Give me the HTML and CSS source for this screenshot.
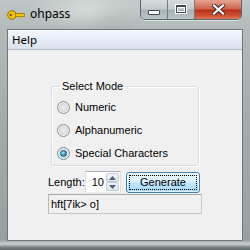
FILE: index.html
```html
<!DOCTYPE html>
<html>
<head>
<meta charset="utf-8">
<link rel="stylesheet" href="styles.css">
</head>
<body>
<div class="window">
  <div class="titlebar">
    <svg class="app-icon" width="18" height="12" viewBox="0 0 18 12">
      <circle cx="5" cy="6" r="4.3" fill="#f2c400" stroke="#9a7300" stroke-width="1"/>
      <circle cx="3.8" cy="6" r="1.2" fill="#7a5a00"/>
      <rect x="8.5" y="4.6" width="8.8" height="2.8" fill="#f2c400" stroke="#9a7300" stroke-width="0.8"/>
      <rect x="13" y="7.4" width="1.6" height="2" fill="#d9a800"/>
    </svg>
    <span class="title">ohpass</span>
    <div class="caption-btns">
      <div class="cb cb-min"><span class="glyph-min"></span></div>
      <div class="cb cb-max"><span class="glyph-max"></span></div>
      <div class="cb cb-close">
        <svg width="13" height="11" viewBox="0 0 13 11">
          <path d="M2 1.5 L11 9.5 M11 1.5 L2 9.5" stroke="#3a2a26" stroke-width="4.2" stroke-linecap="square"/>
          <path d="M2 1.5 L11 9.5 M11 1.5 L2 9.5" stroke="#ffffff" stroke-width="2.2" stroke-linecap="square"/>
        </svg>
      </div>
    </div>
  </div>
  <div class="client">
    <div class="menubar"><span class="menu-item">Help</span></div>
    <div class="form">
      <fieldset class="group">
        <legend class="group-legend">Select Mode</legend>
        <div class="radio-row"><span class="radio"></span><span class="radio-label">Numeric</span></div>
        <div class="radio-row"><span class="radio"></span><span class="radio-label">Alphanumeric</span></div>
        <div class="radio-row"><span class="radio radio-checked"><span class="radio-dot"></span></span><span class="radio-label">Special Characters</span></div>
      </fieldset>
      <div class="ctrl-row">
        <span class="len-label">Length:</span>
        <div class="spin">
          <span class="spin-val">10</span>
          <div class="spin-btns">
            <span class="spin-btn"><svg width="7" height="4" viewBox="0 0 7 4"><path d="M0 4 L3.5 0 L7 4 Z" fill="#4d6185"/></svg></span>
            <span class="spin-btn"><svg width="7" height="4" viewBox="0 0 7 4"><path d="M0 0 L3.5 4 L7 0 Z" fill="#4d6185"/></svg></span>
          </div>
        </div>
        <div class="gen-btn"><span class="gen-focus">Generate</span></div>
      </div>
      <div class="output">hft[7ik&gt; o]</div>
    </div>
  </div>
</div>
</body>
</html>
```

FILE: styles.css
```css
html, body {
  margin: 0;
  padding: 0;
  width: 250px;
  height: 250px;
  overflow: hidden;
}

.window {
  width: 250px;
  height: 250px;
  display: flex;
  flex-direction: column;
  box-sizing: border-box;
  background:
    radial-gradient(ellipse 60px 20px at 90px 10px, rgba(235,240,238,0.55), rgba(235,240,238,0) 100%),
    radial-gradient(ellipse 30px 18px at 110px 18px, rgba(120,130,130,0.25), rgba(120,130,130,0) 100%),
    linear-gradient(180deg, #bfc7c6 0px, #b3bcbb 28px, #a2acab 120px, #97a1a1 240px, #c9cfce 244px, #7e8888 247px, #5e6666 250px);
  font-family: "Liberation Sans", Arial, sans-serif;
  font-size: 11px;
  color: #000;
}

.titlebar {
  height: 29px;
  display: flex;
  align-items: flex-start;
  flex-shrink: 0;
}

.app-icon {
  margin: 9px 0 0 7px;
}

.title {
  margin: 6px 0 0 5px;
  font-family: "Noto Sans", "Open Sans", sans-serif;
  font-size: 12px;
  line-height: 16px;
  color: #000;
}

.caption-btns {
  margin-left: auto;
  margin-right: 8px;
  display: flex;
  height: 19px;
  border: 1px solid #5c6a72;
  border-top: none;
  border-radius: 0 0 5px 5px;
  overflow: hidden;
  box-shadow: 0 1px 0 rgba(255,255,255,0.5);
}

.cb {
  height: 19px;
  display: flex;
  align-items: center;
  justify-content: center;
  box-sizing: border-box;
}

.cb-min {
  width: 27px;
  background: linear-gradient(180deg, #d4dbdd 0%, #c3cccf 45%, #a9b4b8 55%, #b9c3c6 100%);
  border-right: 1px solid #6f7c83;
}

.cb-max {
  width: 27px;
  background: linear-gradient(180deg, #d4dbdd 0%, #c3cccf 45%, #a9b4b8 55%, #b9c3c6 100%);
  border-right: 1px solid #6f7c83;
}

.cb-close {
  width: 46px;
  background: linear-gradient(180deg, #e4a493 0%, #d1654b 45%, #b7321a 55%, #d25536 85%, #e07a5b 100%);
}

.glyph-min {
  width: 10px;
  height: 3px;
  margin-top: 5px;
  background: #fff;
  border: 1px solid #3e4a52;
  border-radius: 1px;
}

.glyph-max {
  width: 8px;
  height: 5px;
  border: 1px solid #3e4a52;
  border-top-width: 2px;
  background: transparent;
  box-shadow: inset 0 0 0 1px #fff, 0 0 0 1px #fff;
  margin-top: -1px;
}

.client {
  flex: 1;
  margin: 0 7px 9px 7px;
  border: 1px solid #6e7878;
  background: #f0f0f0;
  display: flex;
  flex-direction: column;
}

.menubar {
  height: 19px;
  border-bottom: 1px solid #b6bcc6;
  background: linear-gradient(180deg, #f6f8fc 0%, #e5ebf5 50%, #d9e1ef 100%);
  display: flex;
  align-items: center;
}

.menu-item {
  margin-left: 4px;
  font-family: "Noto Sans", "Open Sans", sans-serif;
  font-size: 11.5px;
  line-height: 16px;
  color: #000;
}

.form {
  display: flex;
  flex-direction: column;
  align-items: flex-start;
}

.group {
  margin: 30px 0 0 43px;
  width: 148px;
  box-sizing: border-box;
  padding: 4px 0 0 5px;
  border: 1px solid #d5dfe5;
  border-radius: 3px;
  box-shadow: 1px 1px 0 #fff, inset 1px 1px 0 #fff;
  min-inline-size: 0;
}

.group-legend {
  margin-left: 3px;
  padding: 0 2px;
  line-height: 12px;
  font-size: 11px;
}

.radio-row {
  height: 23px;
  display: flex;
  align-items: center;
}

.radio {
  width: 11px;
  height: 11px;
  border-radius: 50%;
  border: 1px solid #8e8f8f;
  background: radial-gradient(circle at 50% 50%, #f0f0f0 0%, #dcdcdc 45%, #c9c9c9 75%, #f4f4f4 100%);
  box-shadow: inset 0 0 0 1px #f4f4f4;
  display: flex;
  align-items: center;
  justify-content: center;
  flex-shrink: 0;
}

.radio-checked {
  border-color: #6f8fa9;
}

.radio-dot {
  width: 5px;
  height: 5px;
  border-radius: 50%;
  background: radial-gradient(circle at 40% 35%, #c9ecff 0%, #3ea2d7 45%, #1468a0 100%);
  border: 1px solid #1d5f8b;
}

.radio-label {
  margin-left: 5px;
  line-height: 13px;
  white-space: nowrap;
}

.ctrl-row {
  margin: 5px 0 0 40px;
  height: 22px;
  display: flex;
  align-items: flex-start;
}

.len-label {
  width: 37px;
  margin-top: 5px;
  line-height: 13px;
}

.spin {
  width: 36px;
  height: 22px;
  box-sizing: border-box;
  border: 1px solid #abadb3;
  border-color: #abadb3 #dbdfe6 #e3e9ef #e2e3ea;
  background: #fff;
  display: flex;
  align-items: stretch;
  padding: 1px;
}

.spin-val {
  flex: 1;
  text-align: right;
  padding-right: 2px;
  line-height: 18px;
}

.spin-btns {
  width: 13px;
  display: flex;
  flex-direction: column;
}

.spin-btn {
  flex: 1;
  display: flex;
  align-items: center;
  justify-content: center;
  box-sizing: border-box;
  border: 1px solid #c4cbd6;
  border-radius: 2px;
  background: linear-gradient(180deg, #f2f4f8 0%, #dfe4ec 100%);
}

.gen-btn {
  margin: 1px 0 0 5px;
  width: 74px;
  height: 21px;
  box-sizing: border-box;
  border: 1px solid #3c7fb1;
  border-radius: 3px;
  background: linear-gradient(180deg, #eaf6fd 0%, #d9f0fc 48%, #bee6fd 52%, #a7d9f5 100%);
  box-shadow: inset 0 0 0 1px rgba(255,255,255,0.6);
  padding: 2px;
  display: flex;
}

.gen-focus {
  flex: 1;
  border: 1px dotted #000;
  text-align: center;
  line-height: 13px;
}

.output {
  margin: 1px 0 0 40px;
  width: 154px;
  height: 20px;
  box-sizing: border-box;
  border: 1px solid #abadb3;
  border-color: #a6a6a6 #c8c8c8 #c8c8c8 #b8b8b8;
  background: #f0f0f0;
  padding-left: 2px;
  line-height: 18px;
  white-space: nowrap;
}
```
